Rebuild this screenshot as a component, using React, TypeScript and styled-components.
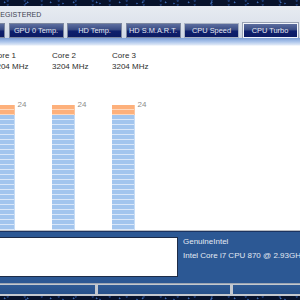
import React from 'react'
import styled, { createGlobalStyle } from 'styled-components'

const GlobalStyle = createGlobalStyle`
  html, body {
    margin: 0;
    padding: 0;
    background: #ffffff;
  }
  body {
    font-family: "Liberation Sans", Arial, sans-serif;
    overflow: hidden;
  }
`

const Frame = styled.div`
  width: 300px;
  height: 300px;
  display: flex;
  flex-direction: column;
  overflow: hidden;
`

const StarBand = styled.div<{ $h: number }>`
  height: ${p => p.$h}px;
  flex: none;
  background-color: #07122b;
  background-image:
    radial-gradient(circle at 20% 40%, #3f6bb0 0.6px, transparent 1.2px),
    radial-gradient(circle at 70% 70%, #2b4f8e 0.6px, transparent 1.2px),
    radial-gradient(circle at 45% 20%, #1d3a70 0.8px, transparent 1.4px);
  background-size: 23px 6px, 37px 5px, 17px 4px;
`

const Header = styled.div`
  flex: none;
  display: flex;
  flex-direction: column;
  background: linear-gradient(to bottom, #e7ebf1 0%, #dde3ec 60%, #cdd6e4 100%);
`

const Title = styled.div`
  height: 16.5px;
  padding-top: 4px;
  box-sizing: border-box;
  margin-left: -5px;
  font-size: 7px;
  line-height: 9px;
  color: #3c4250;
  letter-spacing: 0.1px;
  white-space: nowrap;
`

const TabRow = styled.div`
  height: 15.5px;
  display: flex;
  gap: 3.5px;
  margin-left: -50px;
`

const Tab = styled.div<{ $state?: 'active' | 'hover' }>`
  flex: none;
  width: 55px;
  height: 15.5px;
  box-sizing: border-box;
  border: 1px solid ${p => (p.$state === 'active' ? '#f2f5fa' : p.$state === 'hover' ? '#a9b2c2' : '#7d889f')};
  box-shadow: ${p => (p.$state === 'active' ? '0 0 0 1px #9aa3b4' : 'none')};
  background: linear-gradient(to bottom, #5d6e9f 0%, #3a4d85 42%, #0e1f6c 56%, #0b1b64 100%);
  color: #e4e8f2;
  font-size: 7.4px;
  line-height: 13.5px;
  text-align: center;
  white-space: nowrap;
  overflow: hidden;
`

const Glow = styled.div`
  height: 8px;
  flex: none;
  background: linear-gradient(to bottom, #7d9fd6 0%, #a9c3ea 45%, #dbe6f6 85%, #ffffff 100%);
`

const Content = styled.div`
  height: 184px;
  flex: none;
  background: #ffffff;
  display: flex;
  margin-left: -8px;
`

const CoreColumn = styled.div`
  width: 60px;
  flex: none;
  display: flex;
  flex-direction: column;
  padding-top: 3.5px;
  box-sizing: border-box;
`

const CoreText = styled.div`
  font-size: 8px;
  line-height: 11px;
  color: #2e2e2e;
  white-space: nowrap;
`

const MeterRow = styled.div`
  margin-top: auto;
  display: flex;
  align-items: flex-start;
  gap: 3px;
`

const Meter = styled.div`
  width: 22.5px;
  height: 125px;
  display: flex;
  flex-direction: column;
`

const Segment = styled.div<{ $tone: 'hot' | 'cool'; $rows: number }>`
  height: ${p => p.$rows * 5}px;
  background: repeating-linear-gradient(
    to bottom,
    ${p => (p.$tone === 'hot' ? '#fdb07b' : '#a2c5ee')} 0 4px,
    ${p => (p.$tone === 'hot' ? '#fed8bd' : '#d9e7f9')} 4px 5px
  );
  box-shadow: inset -1px 0 0 ${p => (p.$tone === 'hot' ? '#fdc49c' : '#c6dcf5')};
`

const MeterLabel = styled.div`
  margin-top: -4px;
  font-size: 8px;
  line-height: 8px;
  color: #8c8c8c;
`

const LowerPanel = styled.div`
  flex: none;
  height: 53px;
  box-sizing: border-box;
  background: #2c5894;
  border-top: 1px solid #b9bcc2;
  box-shadow: inset 0 1px 0 #1b3360;
  display: flex;
  align-items: flex-start;
`

const WhiteBox = styled.div`
  width: 178px;
  height: 40px;
  margin-top: 6px;
  box-sizing: border-box;
  background: #ffffff;
  border: 1px solid #1d2c48;
  border-left: none;
  flex: none;
`

const InfoText = styled.div`
  padding: 4px 0 0 5px;
  font-size: 8px;
  line-height: 13.5px;
  color: #e3e9f3;
  white-space: nowrap;
`

const StatusBar = styled.div`
  flex: none;
  height: 13px;
  box-sizing: border-box;
  background: #c3c8cf;
  border-top: 1px solid #9aa4b3;
  padding: 1px 0 2px;
  display: flex;
  gap: 3px;
`

const StatusCell = styled.div<{ $w?: number }>`
  flex: ${p => (p.$w ? `0 0 ${p.$w}px` : '1')};
  background: linear-gradient(to bottom, #2f5b96, #26508a);
`

const cores = [
  { name: 'Core 1', mhz: 3204 },
  { name: 'Core 2', mhz: 3204 },
  { name: 'Core 3', mhz: 3204 },
]

const tabs: { label: string; state?: 'active' | 'hover' }[] = [
  { label: 'CPU Temp.' },
  { label: 'GPU 0 Temp.' },
  { label: 'HD Temp.' },
  { label: 'HD S.M.A.R.T.' },
  { label: 'CPU Speed', state: 'hover' },
  { label: 'CPU Turbo', state: 'active' },
]

const App = () => (
  <Frame>
    <GlobalStyle />
    <StarBand $h={6} />
    <Header>
      <Title>REGISTERED</Title>
      <TabRow>
        {tabs.map(t => (
          <Tab key={t.label} $state={t.state}>{t.label}</Tab>
        ))}
      </TabRow>
    </Header>
    <Glow />
    <Content>
      {cores.map(c => (
        <CoreColumn key={c.name}>
          <CoreText>{c.name}</CoreText>
          <CoreText>{c.mhz} MHz</CoreText>
          <MeterRow>
            <Meter>
              <Segment $tone="hot" $rows={2} />
              <Segment $tone="cool" $rows={23} />
            </Meter>
            <MeterLabel>24</MeterLabel>
          </MeterRow>
        </CoreColumn>
      ))}
    </Content>
    <LowerPanel>
      <WhiteBox />
      <InfoText>
        GenuineIntel
        <br />
        Intel Core i7 CPU 870 @ 2.93GHz
      </InfoText>
    </LowerPanel>
    <StatusBar>
      <StatusCell $w={95} />
      <StatusCell $w={132} />
      <StatusCell />
    </StatusBar>
    <StarBand $h={4} />
  </Frame>
)

export default App
